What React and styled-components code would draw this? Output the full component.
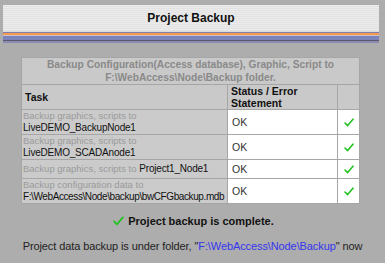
import React from "react";
import styled, { createGlobalStyle } from "styled-components";

const Global = createGlobalStyle`
  html, body { margin: 0; padding: 0; background: #adadad; }
  body { font-family: "Liberation Sans", Arial, sans-serif; color: #111; }
`;

const Page = styled.div`
  width: 385px;
  height: 263px;
  overflow: hidden;
  padding-top: 5px;
  box-sizing: border-box;
`;

const Header = styled.div`
  margin: 0 6px 0 3px;
  display: flex;
  flex-direction: column;
`;

const TitleBar = styled.div`
  height: 26px;
  display: flex;
  align-items: center;
  justify-content: center;
  background: repeating-linear-gradient(
    to bottom,
    #ececec 0px,
    #ececec 1px,
    #e2e2e2 1px,
    #e2e2e2 2px
  );
  font-weight: bold;
  font-size: 12px;
  color: #111;
`;

const Stripes = styled.div`
  height: 12px;
  background: linear-gradient(
    to bottom,
    #dcdcdc 0px, #dcdcdc 1px,
    #8080b0 1px, #8080b0 2px,
    #f7994c 2px, #f7994c 4px,
    #c7c3cf 4px, #c7c3cf 5px,
    #7d82b8 5px, #7d82b8 9px,
    #5a5a6a 9px, #5a5a6a 10px,
    #8a8ab4 10px, #8a8ab4 12px
  );
`;

const Table = styled.table`
  margin: 14px 0 0 21px;
  width: 339px;
  border-collapse: separate;
  border-spacing: 1px;
  background: #a6a6a6;
  table-layout: fixed;
`;

const Caption = styled.td`
  background: #c9c9c9;
  color: #8a8a8a;
  font-weight: bold;
  font-size: 10.2px;
  text-align: center;
  height: 26px;
  padding: 0 2px;
  line-height: 13px;
`;

const Th = styled.td`
  background: #c9c9c9;
  font-weight: bold;
  font-size: 10.5px;
  line-height: 12px;
  height: 24px;
  padding: 0 3px;
  color: #111;
`;

const TaskCell = styled.td`
  background: #cbcbcb;
  padding: 0 1px;
  line-height: 12px;
  height: ${(p) => p.$h}px;
  font-size: 10px;
  color: #111;
  white-space: nowrap;
  overflow: hidden;
`;

const Dim = styled.span`
  color: #9a9a9a;
  font-size: 9.5px;
`;

const Name = styled.span`
  letter-spacing: ${(p) => (p.$tight ? "-0.4px" : "-0.2px")};
`;

const StatusCell = styled.td`
  background: #ffffff;
  padding: 0 4px;
  color: #333;
  font-size: 10.5px;
`;

const CheckCell = styled.td`
  background: #ffffff;
  text-align: center;
  vertical-align: middle;
  padding: 0;
`;

const Complete = styled.div`
  margin-top: 11px;
  display: flex;
  align-items: center;
  justify-content: center;
  gap: 4px;
  font-weight: bold;
  font-size: 11px;
  color: #111;
  padding-left: 2px;
`;

const Note = styled.div`
  margin-top: 13px;
  text-align: center;
  font-size: 11px;
  letter-spacing: -0.1px;
  color: #222;
  white-space: nowrap;
`;

const Link = styled.span`
  color: #3434ee;
`;

const Check = ({ size = 10 }) => (
  <svg width={size} height={size * 0.9} viewBox="0 0 10 9">
    <path d="M1 5 L3.6 7.6 L9 1.2" fill="none" stroke="#22c322" strokeWidth="1.6" strokeLinecap="round" strokeLinejoin="round" />
  </svg>
);

const rows = [
  { h: 24, dim: "Backup graphics, scripts to", name: "LiveDEMO_BackupNode1", br: true },
  { h: 24, dim: "Backup graphics, scripts to", name: "LiveDEMO_SCADAnode1", br: true },
  { h: 14, dim: "Backup graphics, scripts to", name: "Project1_Node1", br: false },
  { h: 24, dim: "Backup configuration data to", name: "F:\\WebAccess\\Node\\backup\\bwCFGbackup.mdb", br: true, tight: true },
];

export default function App() {
  return (
    <Page>
      <Global />
      <Header>
        <TitleBar>Project Backup</TitleBar>
        <Stripes />
      </Header>
      <Table>
        <colgroup>
          <col style={{ width: "205px" }} />
          <col style={{ width: "109px" }} />
          <col style={{ width: "21px" }} />
        </colgroup>
        <tbody>
          <tr>
            <Caption colSpan={3}>
              Backup Configuration(Access database), Graphic, Script to
              <br />
              F:\WebAccess\Node\Backup folder.
            </Caption>
          </tr>
          <tr>
            <Th>Task</Th>
            <Th>
              Status / Error
              <br />
              Statement
            </Th>
            <Th />
          </tr>
          {rows.map((r, i) => (
            <tr key={i}>
              <TaskCell $h={r.h}>
                <Dim>{r.dim}</Dim>
                {r.br ? <br /> : " "}
                <Name $tight={r.tight}>{r.name}</Name>
              </TaskCell>
              <StatusCell>OK</StatusCell>
              <CheckCell>
                <Check />
              </CheckCell>
            </tr>
          ))}
        </tbody>
      </Table>
      <Complete>
        <Check size={11} />
        Project backup is complete.
      </Complete>
      <Note>
        Project data backup is under folder, "<Link>F:\WebAccess\Node\Backup</Link>" now
      </Note>
    </Page>
  );
}
